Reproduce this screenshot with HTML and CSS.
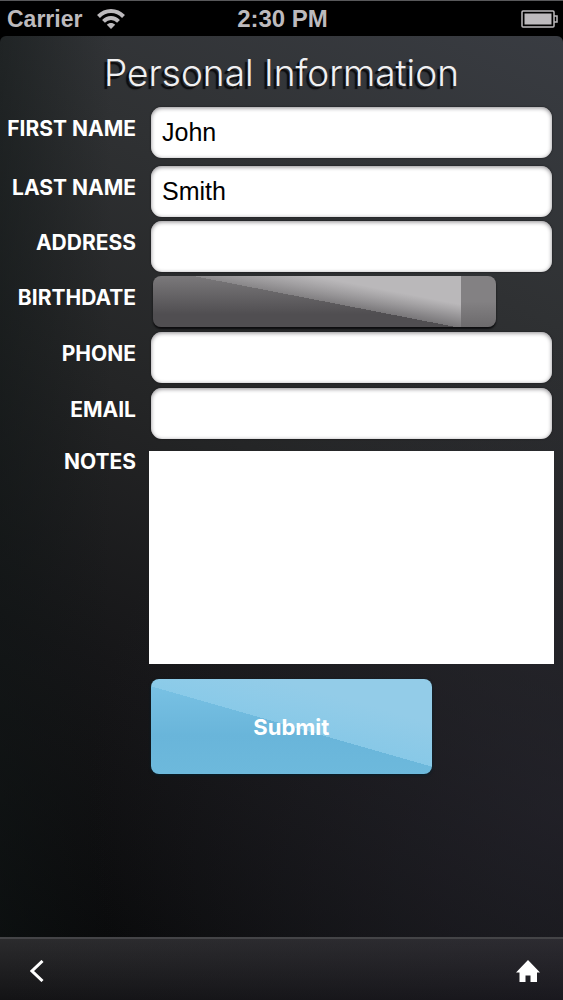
FILE: index.html
```
<!DOCTYPE html>
<html lang="en">
  <head>
    <meta charset="utf-8">
    <meta name="viewport" content="width=device-width, initial-scale=1">
    <title>Personal Information</title>
    <link rel="stylesheet" href="styles.css">
  </head>

  <body>
    <header class="status">
      <div class="status-left">
        <span>Carrier</span>
        <svg class="wifi" width="28" height="20" viewBox="0 0 28 20" fill="none" stroke="currentColor" stroke-width="4" aria-hidden="true">
          <path d="M1.5 7.5C8.500 0.200 19.500 0.200 26.500 7.500" />
          <path d="M6.500 12.300C10.800 8 17.200 8 21.500 12.300" />
          <path d="M14 20L9.800 15.800C12.200 13.500 15.800 13.500 18.200 15.800Z" fill="currentColor" stroke="none" />
        </svg>
      </div>
      <span class="time">2:30 PM</span>
      <svg class="battery" width="37" height="18" viewBox="0 0 37 18" aria-hidden="true">
        <rect x="1" y="1" width="32" height="16" rx="1" fill="none" stroke="currentColor" stroke-width="1.500" />
        <rect x="3.500" y="3.500" width="27" height="11" fill="currentColor" />
        <path d="M33 6H36V12H33" fill="none" stroke="currentColor" stroke-width="1.500" />
      </svg>
    </header>

    <main class="screen">
      <h1>Personal Information</h1>

      <form>
        <div class="row first">
          <label for="firstName">FIRST NAME</label>
          <input class="field" type="text" id="firstName" value="John">
        </div>
        <div class="row">
          <label for="lastName">LAST NAME</label>
          <input class="field" type="text" id="lastName" value="Smith">
        </div>
        <div class="row">
          <label for="address">ADDRESS</label>
          <input class="field" type="text" id="address">
        </div>
        <div class="row contact">
          <label for="birthdate">BIRTHDATE</label>
          <select class="picker" id="birthdate">
            <option value=""></option>
          </select>
        </div>
        <div class="row contact">
          <label for="phone">PHONE</label>
          <input class="field" type="tel" id="phone">
        </div>
        <div class="row contact">
          <label for="email">EMAIL</label>
          <input class="field" type="email" id="email">
        </div>
        <div class="row notes">
          <label for="notes">NOTES</label>
          <textarea id="notes"></textarea>
        </div>
        <div class="row">
          <button class="submit" type="button">Submit</button>
        </div>
      </form>
    </main>

    <nav class="toolbar">
      <a href="#" aria-label="Back">
        <svg width="14" height="22" viewBox="0 0 14 22" fill="none" stroke="#fff" stroke-width="3">
          <path d="M12.500 1L2 11L12.500 21" />
        </svg>
      </a>
      <a href="#" aria-label="Home">
        <svg width="24" height="22" viewBox="0 0 24 22" fill="#fff">
          <path d="M12 0L24 12.500H21V22H14.500V15.500H9.500V22H3.500V12.500H0Z" />
        </svg>
      </a>
    </nav>
  </body>
</html>
```
FILE: styles.css
```
* {
  box-sizing: border-box;
}
body {
  margin: 0;
  min-height: 100vh;
  display: flex;
  flex-direction: column;
  background: #000;
  color: #fff;
  font-family: Inter, "Liberation Sans", sans-serif;
}

/* status bar */
.status {
  display: grid;
  grid-template-columns: 1fr auto 1fr;
  align-items: center;
  height: 36px;
  padding: 0 5px 0 7px;
  border-top: 1px solid #58585a;
  color: #bdbabd;
  font: bold 23px/34px "Liberation Sans", sans-serif;
}
.status-left {
  display: flex;
  align-items: center;
  gap: 15px;
}
.time {
  font-size: 24px;
}
.battery {
  justify-self: end;
}

/* form */
.screen {
  flex: 1;
  padding: 13px 11px 16px 0;
  border-radius: 6px 6px 0 0;
  background:
    linear-gradient(to right, rgba(16, 22, 22, 0.5), rgba(16, 22, 22, 0) 20%),
    radial-gradient(circle at 100% 85%, rgba(38, 37, 47, 0.6), rgba(38, 37, 47, 0) 50%),
    linear-gradient(205deg, #393c42 0%, #2f3133 25%, #242526 48%, #161618 72%, #08090a 100%);
}
h1 {
  margin: 0 0 10px 11px;
  text-align: center;
  font-size: 37px;
  line-height: 48px;
  font-weight: 300;
  color: #f0f0f2;
  text-shadow: -3px 3px 1px #0c0c0e;
}
.row {
  display: grid;
  grid-template-columns: 136px 1fr;
  column-gap: 15px;
  margin-bottom: 4px;
}
.row.first {
  margin-bottom: 8px;
}
.row.contact {
  margin-bottom: 5px;
}
label {
  text-align: right;
  font-size: 21px;
  line-height: 44px;
  font-weight: 700;
  white-space: nowrap;
}
.field {
  width: 100%;
  height: 51px;
  padding: 0 11px;
  border: 0;
  border-radius: 11px;
  background: #fff;
  box-shadow: inset 0 1px 4px #8a888c, 0 0 2px #151517;
  color: #000;
  font: 25px "Liberation Sans", sans-serif;
}
.picker {
  appearance: none;
  width: calc(86% - 2px);
  height: 51px;
  margin-left: 2px;
  border: 0;
  border-radius: 8px;
  background:
    linear-gradient(#838183 50%, #6c6a6c) right / 35px 100% no-repeat,
    linear-gradient(11deg, transparent 50%, rgba(160, 158, 160, 0.5) 50%, #bab8ba 70%),
    linear-gradient(#7b797b, #504e51 75%);
  box-shadow: 0 2px 2px #0c0c0e;
}
.row.notes {
  margin: 12px 0 15px;
}
.notes label {
  line-height: 22px;
}
textarea {
  height: 213px;
  margin: 0 -2px;
  padding: 10px;
  border: 0;
  border-radius: 0;
  background: #fff;
  resize: none;
  font: 25px "Liberation Sans", sans-serif;
}
.submit {
  grid-column: 2;
  width: 70%;
  height: 95px;
  border: 0;
  border-radius: 8px;
  background:
    linear-gradient(16deg, transparent 50%, rgba(143, 205, 234, 0.8) 50%, #93cce8 75%),
    linear-gradient(#7bc3e5, #69b5da 60%, #6db9dc);
  box-shadow: 0 1px 3px #06202c;
  color: #fff;
  font: 700 22px Inter, sans-serif;
}

/* bottom toolbar */
.toolbar {
  display: flex;
  justify-content: space-between;
  align-items: center;
  height: 63px;
  padding: 2px 23px 0 30px;
  border-top: 2px solid #444447;
  background:
    linear-gradient(to right, transparent, rgba(50, 45, 65, 0.2)),
    linear-gradient(#2b2b2d, #131315);
}
.toolbar svg {
  display: block;
}
```
